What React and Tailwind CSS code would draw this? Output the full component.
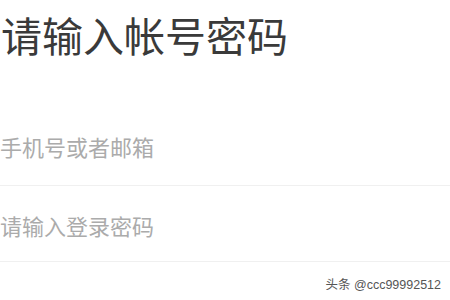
export default function App() {
  return (
    <div
      className="relative w-[450px] h-[300px] overflow-hidden bg-white"
      style={{ fontFamily: '"Noto Sans CJK SC", "Noto Sans", sans-serif' }}
    >
      <div className="pt-[14px] pl-[1px] text-[41px] leading-[41px] text-[#3a3a3a]">请输入帐号密码</div>
      <div className="mt-[55px]">
        <div className="h-[76px] border-b border-[#f0f0f0] flex items-center pb-[4px] text-[22px] leading-[22px] text-[#ababab]">
          手机号或者邮箱
        </div>
        <div className="h-[76px] border-b border-[#f0f0f0] flex items-center pt-[2px] text-[22px] leading-[22px] text-[#ababab]">
          请输入登录密码
        </div>
      </div>
      <div
        className="absolute right-[9px] bottom-[8px] text-[12.5px] leading-[13px] text-[#555555]"
        style={{ fontFamily: '"Liberation Sans", "Noto Sans CJK SC", sans-serif' }}
      >
        头条 @ccc99992512
      </div>
    </div>
  );
}
